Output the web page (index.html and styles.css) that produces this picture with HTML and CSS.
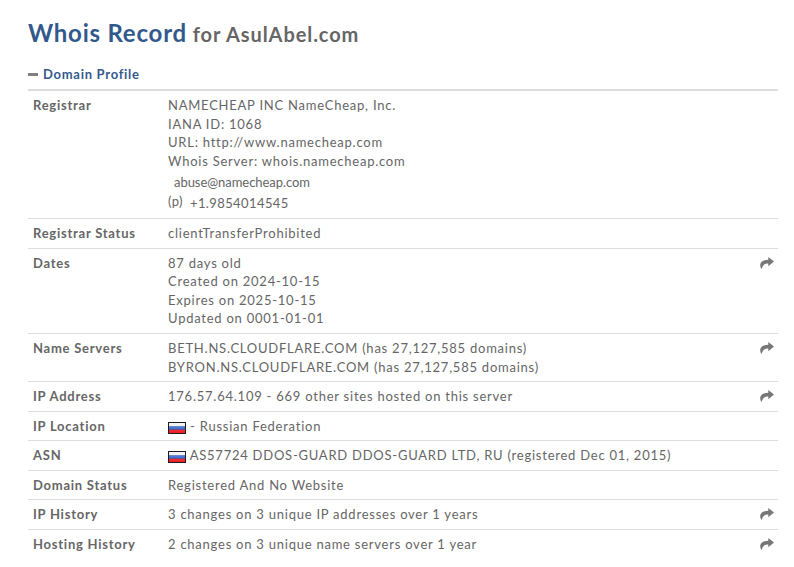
FILE: index.html
```html
<!DOCTYPE html>
<html lang="en">
<head>
<meta charset="utf-8">
<title>Whois Record for AsulAbel.com</title>
<link rel="stylesheet" href="styles.css">
</head>
<body>
<svg class="defs" width="0" height="0" aria-hidden="true">
  <defs>
    <symbol id="share" viewBox="0 0 14 12">
      <path d="M8.3 0 L14 4.6 L8.3 9.2 L8.3 6.6 C5.2 6.3 2.8 7.4 1.6 12 C0.4 10.6 -0.1 8.6 0.4 6.8 C1.3 4 4.4 2.8 8.3 2.7 Z"/>
    </symbol>
    <linearGradient id="ru-gloss" x1="0" y1="0" x2="0" y2="1">
      <stop offset="0" stop-color="#fff" stop-opacity=".45"/>
      <stop offset=".5" stop-color="#fff" stop-opacity=".12"/>
      <stop offset="1" stop-color="#fff" stop-opacity="0"/>
    </linearGradient>
    <symbol id="flag" viewBox="0 0 18 12">
      <rect width="18" height="12" fill="#1c1c1c"/>
      <rect x="1" y="1" width="16" height="3.4" fill="#e8ebf2"/>
      <rect x="1" y="4.4" width="16" height="3.3" fill="#2b5fd0"/>
      <rect x="1" y="7.7" width="16" height="3.3" fill="#ee1c25"/>
      <rect x="1" y="1" width="16" height="10" fill="url(#ru-gloss)"/>
    </symbol>
  </defs>
</svg>
<main class="page">
  <h1 class="title"><span class="title-main">Whois Record</span> <span class="title-sub">for AsulAbel.com</span></h1>
  <h2 class="section"><span class="minus"></span>Domain Profile</h2>
  <div class="record">
    <div class="row">
      <div class="label">Registrar</div>
      <div class="value">
        <div>NAMECHEAP INC NameCheap, Inc.</div>
        <div>IANA ID: 1068</div>
        <div>URL: http://www.namecheap.com</div>
        <div>Whois Server: whois.namecheap.com</div>
        <div class="email">abuse@namecheap.com</div>
        <div class="phone"><span class="phone-tag">(p)</span><span class="phone-num">+1.9854014545</span></div>
      </div>
    </div>
    <div class="row">
      <div class="label">Registrar Status</div>
      <div class="value">clientTransferProhibited</div>
    </div>
    <div class="row">
      <div class="label">Dates</div>
      <div class="value">
        <div>87 days old</div>
        <div>Created on 2024-10-15</div>
        <div>Expires on 2025-10-15</div>
        <div>Updated on 0001-01-01</div>
      </div>
      <svg class="share"><use href="#share"/></svg>
    </div>
    <div class="row">
      <div class="label">Name Servers</div>
      <div class="value">
        <div>BETH.NS.CLOUDFLARE.COM (has 27,127,585 domains)</div>
        <div>BYRON.NS.CLOUDFLARE.COM (has 27,127,585 domains)</div>
      </div>
      <svg class="share"><use href="#share"/></svg>
    </div>
    <div class="row">
      <div class="label">IP Address</div>
      <div class="value">176.57.64.109 - 669 other sites hosted on this server</div>
      <svg class="share"><use href="#share"/></svg>
    </div>
    <div class="row">
      <div class="label">IP Location</div>
      <div class="value"><svg class="flag"><use href="#flag"/></svg> - Russian Federation</div>
    </div>
    <div class="row">
      <div class="label">ASN</div>
      <div class="value"><svg class="flag"><use href="#flag"/></svg> AS57724 DDOS-GUARD DDOS-GUARD LTD, RU (registered Dec 01, 2015)</div>
    </div>
    <div class="row">
      <div class="label">Domain Status</div>
      <div class="value">Registered And No Website</div>
    </div>
    <div class="row">
      <div class="label">IP History</div>
      <div class="value">3 changes on 3 unique IP addresses over 1 years</div>
      <svg class="share"><use href="#share"/></svg>
    </div>
    <div class="row">
      <div class="label">Hosting History</div>
      <div class="value">2 changes on 3 unique name servers over 1 year</div>
      <svg class="share"><use href="#share"/></svg>
    </div>
  </div>
</main>
</body>
</html>
```

FILE: styles.css
```css
* { box-sizing: border-box; }
html, body { margin: 0; padding: 0; background: #fff; }
body {
  font-family: Lato, "Liberation Sans", sans-serif;
  font-size: 13px;
  line-height: 18.55px;
  color: #666;
  letter-spacing: 0.76px;
}
.defs { position: absolute; }
.page { padding: 17px 16px 0 28px; }
.title { margin: 0; font-size: 20px; line-height: 32px; font-weight: 700; letter-spacing: 0.92px; }
.title-main { color: #32598c; font-size: 24px; letter-spacing: 0.77px; }
.title-sub { color: #666; }
.section {
  display: flex;
  align-items: center;
  margin: 15px 0 0;
  height: 18px;
  font-size: 13px;
  font-weight: 700;
  color: #36598e;
  letter-spacing: 0.72px;
}
.minus { width: 10px; height: 3px; background: #808080; margin-right: 5px; }
.record { margin-top: 6.2px; border-top: 2px solid #ddd; }
.row {
  display: flex;
  align-items: flex-start;
  padding: 5px 5px 5px;
  border-bottom: 1px solid #ddd;
}
.row:last-child { border-bottom: 0; }
.label { width: 135px; flex: none; font-weight: 700; color: #666; letter-spacing: 0.75px; }
.value { flex: 1; }
.email { letter-spacing: -0.05px; margin: 3px 0 0 6px; }
.phone { display: flex; align-items: flex-start; margin-top: 1.3px; }
.phone-tag { letter-spacing: 0.4px; margin-right: 7px; line-height: 16px; }
.phone-num { letter-spacing: 0.4px; line-height: 20px; }
.flag { width: 18px; height: 12px; vertical-align: -3px; }
.share { width: 14px; height: 12px; flex: none; margin: 3px -1px 0 0; fill: #777; }
```
